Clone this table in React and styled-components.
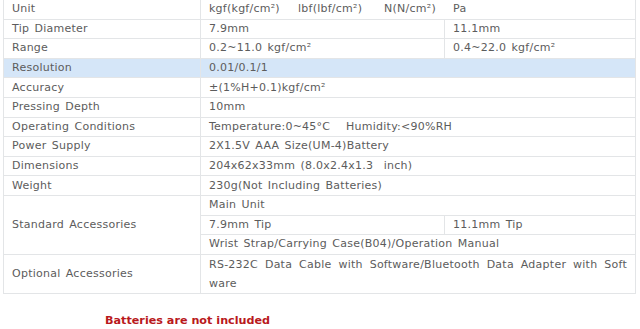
import React from 'react';
import styled, { createGlobalStyle } from 'styled-components';

const Global = createGlobalStyle`
	html, body {
		margin: 0;
		padding: 0;
		background: #fff;
		overflow: hidden;
	}
`;

const Page = styled.div`
	width: 640px;
	height: 329px;
	padding: 0 4px 0 3px;
	box-sizing: border-box;
	font-family: "DejaVu Sans", Verdana, sans-serif;
	font-size: 11px;
	letter-spacing: 0.25px;
	word-spacing: 1.5px;
	color: #5c5c5c;
`;

const Specs = styled.table`
	width: 633px;
	margin-top: -1px;
	border-collapse: collapse;
	table-layout: fixed;
`;

const Row = styled.tr`
	background: ${p => (p.$hl ? '#d5e6f8' : '#fff')};
`;

const Cell = styled.td`
	border: 1px solid #e3e5e7;
	height: 18.6px;
	padding: 0 8px;
	line-height: 16px;
	vertical-align: middle;
	white-space: nowrap;
	text-align: left;
`;

const Unit = styled.span`
	display: inline-block;
	width: ${p => p.$w}px;
	word-spacing: 0;
`;

const Wrapped = styled.div`
	white-space: normal;
	line-height: 19px;
`;

const Justified = styled.span`
	display: block;
	text-align: justify;
	text-align-last: justify;
`;

const Note = styled.div`
	margin-top: 20px;
	padding-left: 102px;
	font-family: "DejaVu Sans", Verdana, sans-serif;
	font-size: 11.2px;
	line-height: 14px;
	letter-spacing: 0;
	word-spacing: 0;
	font-weight: bold;
	color: #b9191c;
`;

const App = () =>
	<Page>
		<Global />
		<Specs>
			<colgroup>
				<col style={{ width: 197 }} />
				<col style={{ width: 244 }} />
				<col />
			</colgroup>
			<tbody>
				<Row>
					<Cell>Unit</Cell>
					<Cell colSpan={2}>
						<Unit $w={89}>kgf(kgf/cm²)</Unit>
						<Unit $w={86}>lbf(lbf/cm²)</Unit>
						<Unit $w={69}>N(N/cm²)</Unit>
						<Unit $w={30}>Pa</Unit>
					</Cell>
				</Row>
				<Row>
					<Cell>Tip Diameter</Cell>
					<Cell>7.9mm</Cell>
					<Cell>11.1mm</Cell>
				</Row>
				<Row>
					<Cell>Range</Cell>
					<Cell>0.2~11.0 kgf/cm²</Cell>
					<Cell>0.4~22.0 kgf/cm²</Cell>
				</Row>
				<Row $hl>
					<Cell>Resolution</Cell>
					<Cell colSpan={2}>0.01/0.1/1</Cell>
				</Row>
				<Row>
					<Cell>Accuracy</Cell>
					<Cell colSpan={2}>±(1%H+0.1)kgf/cm²</Cell>
				</Row>
				<Row>
					<Cell>Pressing Depth</Cell>
					<Cell colSpan={2}>10mm</Cell>
				</Row>
				<Row>
					<Cell>Operating Conditions</Cell>
					<Cell colSpan={2}>Temperature:0~45°C&nbsp;&nbsp; Humidity:&lt;90%RH</Cell>
				</Row>
				<Row>
					<Cell>Power Supply</Cell>
					<Cell colSpan={2}>2X1.5V AAA Size(UM-4)Battery</Cell>
				</Row>
				<Row>
					<Cell>Dimensions</Cell>
					<Cell colSpan={2}>204x62x33mm (8.0x2.4x1.3&nbsp; inch)</Cell>
				</Row>
				<Row>
					<Cell>Weight</Cell>
					<Cell colSpan={2}>230g(Not Including Batteries)</Cell>
				</Row>
				<Row>
					<Cell rowSpan={3}>Standard Accessories</Cell>
					<Cell colSpan={2}>Main Unit</Cell>
				</Row>
				<Row>
					<Cell>7.9mm Tip</Cell>
					<Cell>11.1mm Tip</Cell>
				</Row>
				<Row>
					<Cell colSpan={2}>Wrist Strap/Carrying Case(B04)/Operation Manual</Cell>
				</Row>
				<Row>
					<Cell>Optional Accessories</Cell>
					<Cell colSpan={2}>
						<Wrapped>
							<Justified>RS-232C Data Cable with Software/Bluetooth Data Adapter with Soft</Justified>
							ware
						</Wrapped>
					</Cell>
				</Row>
			</tbody>
		</Specs>
		<Note>Batteries are not included</Note>
	</Page>

export default App;
